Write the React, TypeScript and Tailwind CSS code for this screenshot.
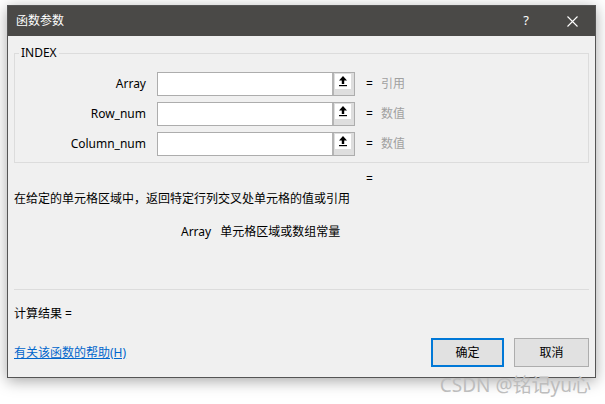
import React from "react";

const font = { fontFamily: '"Noto Sans", "Noto Sans CJK SC", sans-serif' };

function RefButton() {
  return (
    <div className="flex h-full w-[22px] items-start border-l-2 border-[#b4b4b4] bg-[#dedede] pl-[1px] pt-[1px]">
      <div className="flex h-[15px] w-[16px] items-center justify-center bg-white">
        <svg width="16" height="15" viewBox="0 0 16 15">
          <path d="M8 2 L4 6.5 H6.8 V10 H9.2 V6.5 H12 Z" fill="#000" />
          <rect x="4" y="11" width="8" height="1.2" fill="#000" />
        </svg>
      </div>
    </div>
  );
}

function ArgRow({ label, value }: { label: string; value: string }) {
  return (
    <div className="flex h-[24px] items-center">
      <div className="w-[132px] pr-[1px] text-right text-[12px] text-black">{label}</div>
      <div className="ml-[10px] flex h-[24px] w-[198px] border border-[#adadad] bg-white">
        <div className="flex-1" />
        <RefButton />
      </div>
      <span className="ml-[11px] text-[12px] text-black">=</span>
      <span className="ml-[8px] text-[12px] text-[#a0a0a0]">{value}</span>
    </div>
  );
}

export default function App() {
  return (
    <div className="relative h-[404px] w-[605px] overflow-hidden bg-white pl-[7px] pt-[5px]" style={font}>
      <div className="flex w-[589px] flex-col border border-[#555] bg-[#f0f0f0] shadow-[0_3px_14px_rgba(0,0,0,0.35)]">
        {/* Title bar */}
        <div className="flex h-[30px] items-center justify-between bg-[#4a4947] pl-[8px] text-white">
          <span className="text-[12px]">函数参数</span>
          <div className="flex items-center">
            <span className="mr-[38px] text-[13px]">?</span>
            <svg className="mr-[17px]" width="11" height="11" viewBox="0 0 11 11">
              <path d="M0.5 0.5 L10.5 10.5 M10.5 0.5 L0.5 10.5" stroke="#fff" strokeWidth="1.1" />
            </svg>
          </div>
        </div>

        {/* Body */}
        <div className="flex flex-col px-[6px] pb-[10px]">
          <fieldset className="mt-[9px] border border-[#dcdcdc] pb-[6px]">
            <legend className="ml-[4px] px-[2px] text-[12px] leading-[16px] text-black">INDEX</legend>
            <div className="mt-[11px] flex flex-col gap-[6px]">
              <ArgRow label="Array" value="引用" />
              <ArgRow label="Row_num" value="数值" />
              <ArgRow label="Column_num" value="数值" />
            </div>
          </fieldset>

          <div className="mt-[8px] pl-[352px] text-[12px] leading-[16px] text-black">=</div>
          <div className="mt-[4px] text-[12px] leading-[16px] text-black">
            在给定的单元格区域中，返回特定行列交叉处单元格的值或引用
          </div>
          <div className="mt-[17px] flex pl-[167px] text-[12px] leading-[16px] text-black">
            <span>Array</span>
            <span className="ml-[9px]">单元格区域或数组常量</span>
          </div>

          <div className="mt-[49px] border-t border-[#dcdcdc]" />

          <div className="mt-[16px] text-[12px] leading-[16px] text-black">计算结果 =</div>

          <div className="mt-[16px] flex items-center justify-between">
            <a href="#" className="text-[12px] text-[#0066cc] underline">
              有关该函数的帮助(H)
            </a>
            <div className="flex gap-[10px]">
              <button className="h-[29px] w-[73px] border-2 border-[#0078d7] bg-[#e1e1e1] text-[12px] text-black">
                确定
              </button>
              <button className="h-[29px] w-[75px] border border-[#adadad] bg-[#e1e1e1] text-[12px] text-black">
                取消
              </button>
            </div>
          </div>
        </div>
      </div>

      <div className="absolute bottom-[8px] right-[14px] text-[19px] leading-[22px] text-[#bdbdbd]">
        CSDN @铭记yu心
      </div>
    </div>
  );
}
